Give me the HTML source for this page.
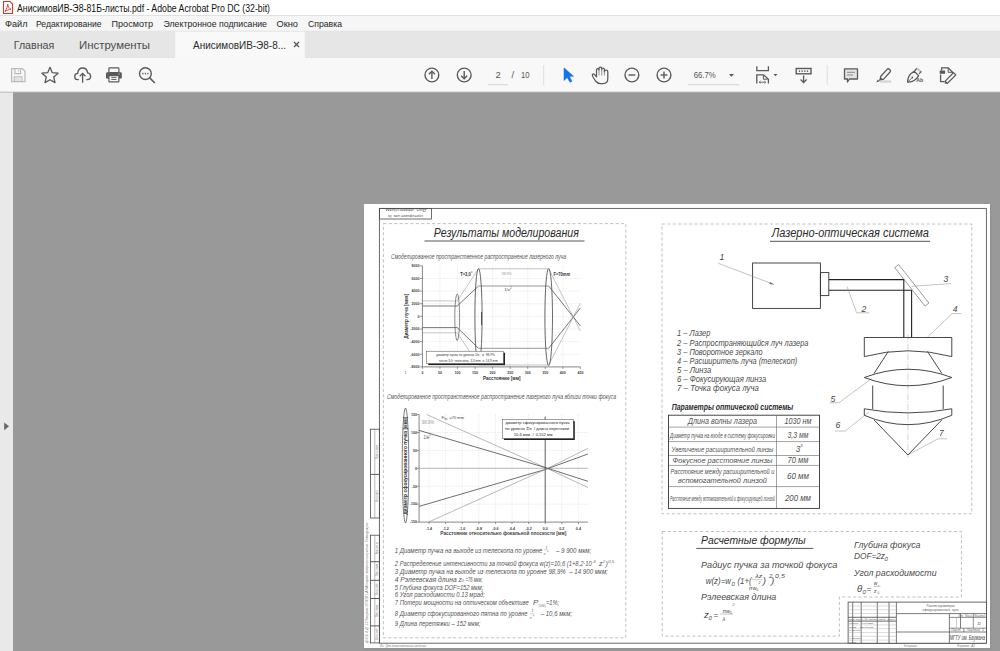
<!DOCTYPE html>
<html><head><meta charset="utf-8"><title>Acrobat</title>
<style>
*{margin:0;padding:0}
html,body{width:1000px;height:651px;overflow:hidden;background:#999999}
svg{position:absolute;left:0;top:0;display:block}
text{font-family:"Liberation Sans",sans-serif;white-space:pre}
</style></head><body>
<svg width="1000" height="651" viewBox="0 0 1000 651">
<rect x="0.00" y="0.00" width="1000.00" height="651.00" fill="#999999" stroke="none" stroke-width="0.6" />
<rect x="0.00" y="0.00" width="1000.00" height="15.50" fill="#ffffff" stroke="none" stroke-width="0.6" />
<path d="M3.5 1.5 H10 L12.5 4 V13.5 H3.5 Z" fill="none" stroke="#e0352b" stroke-width="1.1" />
<path d="M5 11.5 C6.5 9 7.5 6.5 7.8 4.2 C8 6.5 9 8.5 11 9.3 C9 9.3 6.8 10.3 5 11.5 Z" fill="none" stroke="#e0352b" stroke-width="0.9" />
<text x="17.00" y="12.00" font-size="10" fill="#111" text-anchor="start" textLength="253.00" lengthAdjust="spacingAndGlyphs" >АнисимовИВ-Э8-81Б-листы.pdf - Adobe Acrobat Pro DC (32-bit)</text>
<rect x="0.00" y="15.50" width="1000.00" height="15.50" fill="#f6f6f6" stroke="none" stroke-width="0.6" />
<text x="5.00" y="27.00" font-size="9" fill="#262626" text-anchor="start" textLength="22.50" lengthAdjust="spacingAndGlyphs" >Файл</text>
<text x="36.00" y="27.00" font-size="9" fill="#262626" text-anchor="start" textLength="65.50" lengthAdjust="spacingAndGlyphs" >Редактирование</text>
<text x="111.50" y="27.00" font-size="9" fill="#262626" text-anchor="start" textLength="41.50" lengthAdjust="spacingAndGlyphs" >Просмотр</text>
<text x="163.50" y="27.00" font-size="9" fill="#262626" text-anchor="start" textLength="103.50" lengthAdjust="spacingAndGlyphs" >Электронное подписание</text>
<text x="276.50" y="27.00" font-size="9" fill="#262626" text-anchor="start" textLength="21.50" lengthAdjust="spacingAndGlyphs" >Окно</text>
<text x="308.00" y="27.00" font-size="9" fill="#262626" text-anchor="start" textLength="34.00" lengthAdjust="spacingAndGlyphs" >Справка</text>
<rect x="0.00" y="31.00" width="1000.00" height="27.00" fill="#e6e6e6" stroke="none" stroke-width="0.6" />
<rect x="174.70" y="31.60" width="130.50" height="26.60" fill="#f9f9f9" stroke="none" stroke-width="0.6" />
<line x1="174.70" y1="31.60" x2="174.70" y2="58.20" stroke="#dedede" stroke-width="0.6" />
<line x1="305.20" y1="31.60" x2="305.20" y2="58.20" stroke="#dedede" stroke-width="0.6" />
<line x1="0.00" y1="31.10" x2="1000.00" y2="31.10" stroke="#e3e3e3" stroke-width="0.6" />
<text x="13.75" y="49.00" font-size="11.5" fill="#4b4b4b" text-anchor="start" textLength="40.50" lengthAdjust="spacingAndGlyphs" >Главная</text>
<text x="79.00" y="49.00" font-size="11.5" fill="#4b4b4b" text-anchor="start" textLength="71.00" lengthAdjust="spacingAndGlyphs" >Инструменты</text>
<text x="193.00" y="49.00" font-size="11.5" fill="#2c2c2c" text-anchor="start" textLength="93.00" lengthAdjust="spacingAndGlyphs" >АнисимовИВ-Э8-8...</text>
<line x1="294.00" y1="42.00" x2="299.00" y2="47.00" stroke="#555" stroke-width="1.2" />
<line x1="299.00" y1="42.00" x2="294.00" y2="47.00" stroke="#555" stroke-width="1.2" />
<rect x="0.00" y="58.00" width="1000.00" height="34.50" fill="#f8f8f8" stroke="none" stroke-width="0.6" />
<line x1="0.00" y1="92.20" x2="1000.00" y2="92.20" stroke="#7e7e7e" stroke-width="0.6" />
<rect x="0.00" y="92.50" width="13.00" height="559.00" fill="#e9e9e9" stroke="none" stroke-width="0.6" />
<path d="M4.2 422.5 L9 426.3 L4.2 430.2 Z" fill="#666" stroke="none" stroke-width="0.6" />
<path d="M11.6 68.6 H22.4 L25 71.2 V81.6 H11.6 Z" fill="none" stroke="#b9b9b9" stroke-width="1.25" />
<path d="M14.9 68.6 V73.6 H20.6 V68.6" fill="none" stroke="#b9b9b9" stroke-width="1.15" />
<path d="M14.2 81.6 V76.8 H22 V81.6" fill="none" stroke="#b9b9b9" stroke-width="1.15" />
<rect x="15.00" y="77.50" width="6.50" height="3.60" fill="#e2e2e2" stroke="none" stroke-width="0.6" />
<line x1="18.60" y1="69.80" x2="18.60" y2="71.60" stroke="#b9b9b9" stroke-width="0.9" />
<path d="M50.00,67.30 L52.29,72.64 L58.08,73.17 L53.71,77.01 L55.00,82.68 L50.00,79.70 L45.00,82.68 L46.29,77.01 L41.92,73.17 L47.71,72.64 Z" fill="none" stroke="#5a5a5a" stroke-width="1.3" stroke-linejoin="round"/>
<path d="M78.8 79.7 H77.5 C75.8 79.7 74.7 78.2 74.7 76.5 C74.7 74.8 76 73.5 77.6 73.4 C78 70.3 80 68 82.6 68 C85.3 68 87.2 70 87.6 72.8 C89.4 73 90.6 74.5 90.6 76.3 C90.6 78.2 89.2 79.7 87.4 79.7 H86.4" fill="none" stroke="#5a5a5a" stroke-width="1.3" />
<line x1="82.60" y1="73.50" x2="82.60" y2="82.70" stroke="#5a5a5a" stroke-width="1.3" />
<path d="M79.8 76.2 L82.6 73.4 L85.4 76.2" fill="none" stroke="#5a5a5a" stroke-width="1.3" />
<rect x="108.9" y="67.9" width="10" height="4.6" rx="0.8" fill="none" stroke="#5a5a5a" stroke-width="1.2"/>
<path d="M106 73.6 Q106 72.3 107.3 72.3 H120.5 Q121.8 72.3 121.8 73.6 V78.6 H106 Z" fill="#5a5a5a" stroke="none" stroke-width="0.6" />
<rect x="108.9" y="75.7" width="10" height="6.1" rx="0.6" fill="#f8f8f8" stroke="#5a5a5a" stroke-width="1.2"/>
<line x1="111.30" y1="77.60" x2="116.50" y2="77.60" stroke="#5a5a5a" stroke-width="0.9" />
<line x1="111.30" y1="79.50" x2="116.50" y2="79.50" stroke="#5a5a5a" stroke-width="0.9" />
<rect x="118.30" y="73.60" width="1.50" height="1.00" fill="#aaa" stroke="none" stroke-width="0.6" />
<circle cx="145.4" cy="73.6" r="5.9" fill="none" stroke="#5a5a5a" stroke-width="1.4"/>
<line x1="149.70" y1="77.90" x2="154.80" y2="83.00" stroke="#5a5a5a" stroke-width="1.6" />
<rect x="142.27" y="72.8" width="1.2" height="1.6" fill="#5a5a5a"/>
<rect x="144.80" y="72.8" width="1.2" height="1.6" fill="#5a5a5a"/>
<rect x="147.33" y="72.8" width="1.2" height="1.6" fill="#5a5a5a"/>
<circle cx="431.9" cy="75" r="6.9" fill="none" stroke="#5a5a5a" stroke-width="1.4"/>
<line x1="431.90" y1="71.30" x2="431.90" y2="79.00" stroke="#5a5a5a" stroke-width="1.4" />
<path d="M428.9 74.2 L431.9 71.2 L434.9 74.2" fill="none" stroke="#5a5a5a" stroke-width="1.4" />
<circle cx="464.2" cy="75" r="6.9" fill="none" stroke="#5a5a5a" stroke-width="1.4"/>
<line x1="464.20" y1="71.00" x2="464.20" y2="78.70" stroke="#5a5a5a" stroke-width="1.4" />
<path d="M461.2 75.8 L464.2 78.8 L467.2 75.8" fill="none" stroke="#5a5a5a" stroke-width="1.4" />
<text x="495.60" y="78.20" font-size="9.5" fill="#555" text-anchor="start" >2</text>
<line x1="487.80" y1="84.70" x2="508.00" y2="84.70" stroke="#d4d4d4" stroke-width="1" />
<text x="511.50" y="78.20" font-size="9.5" fill="#555" text-anchor="start" >/</text>
<text x="521.00" y="78.20" font-size="9.5" fill="#555" text-anchor="start" textLength="8.50" lengthAdjust="spacingAndGlyphs" >10</text>
<line x1="543.70" y1="65.00" x2="543.70" y2="85.00" stroke="#dedede" stroke-width="1" />
<path d="M564 67.8 L564 80.5 L567.2 77.6 L570 82.2 L572 81.2 L569.5 76.6 L573.5 76.2 Z" fill="#1473e6" stroke="#1473e6" stroke-width="0.5" stroke-linejoin="round"/>
<path d="M596.5 76.8 L594.6 74.6 Q593.2 73.3 592.4 74.5 Q592.2 75.5 593 77 L595.5 81 Q597.5 83.6 600.5 83.6 H603 Q607.8 83.6 607.8 78.5 V71.8 Q607.8 70 606.1 70 Q604.4 70 604.4 71.8 V69.7 Q604.4 68 603 68 Q601.7 68 601.7 69.7 V68.7 Q601.7 67 600.35 67 Q599 67 599 68.7 V70.2 Q599 68.5 597.75 68.5 Q596.5 68.5 596.5 70.2 Z" fill="none" stroke="#5a5a5a" stroke-width="1.25" stroke-linejoin="round"/>
<path d="M599 70.2 V75.5 M601.7 69.7 V75.5 M604.4 71.8 V75.5" fill="none" stroke="#8a8a8a" stroke-width="0.9" />
<circle cx="631.9" cy="75" r="6.9" fill="none" stroke="#5a5a5a" stroke-width="1.4"/>
<line x1="628.50" y1="75.00" x2="635.30" y2="75.00" stroke="#5a5a5a" stroke-width="1.4" />
<circle cx="664" cy="75" r="6.9" fill="none" stroke="#5a5a5a" stroke-width="1.4"/>
<line x1="660.60" y1="75.00" x2="667.40" y2="75.00" stroke="#5a5a5a" stroke-width="1.4" />
<line x1="664.00" y1="71.60" x2="664.00" y2="78.40" stroke="#5a5a5a" stroke-width="1.4" />
<text x="693.70" y="78.00" font-size="8.8" fill="#555" text-anchor="start" textLength="22.00" lengthAdjust="spacingAndGlyphs" >66.7%</text>
<path d="M729 74 L734 74 L731.5 76.8 Z" fill="#555" stroke="none" stroke-width="0.6" />
<line x1="687.70" y1="84.70" x2="739.50" y2="84.70" stroke="#d4d4d4" stroke-width="1" />
<path d="M756.8 66.3 V70.6 H768.4 V66.3" fill="none" stroke="#5a5a5a" stroke-width="1.3" />
<path d="M756.8 83.6 V74.9 H763.6 L768.4 79.4 V83.6" fill="none" stroke="#5a5a5a" stroke-width="1.3" />
<path d="M763.4 75.3 V79.2 H767.6" fill="none" stroke="#5a5a5a" stroke-width="1.0" />
<line x1="759.30" y1="82.20" x2="765.60" y2="82.20" stroke="#5a5a5a" stroke-width="0.9" />
<path d="M760.6 81 L759.2 82.2 L760.6 83.4 M764.3 81 L765.7 82.2 L764.3 83.4" fill="none" stroke="#5a5a5a" stroke-width="0.8" />
<path d="M773.5 74 L777.5 74 L775.5 76.3 Z" fill="#555" stroke="none" stroke-width="0.6" />
<rect x="796.20" y="68.50" width="14.80" height="5.30" fill="none" stroke="#5a5a5a" stroke-width="1.4" />
<rect x="798.80" y="70.40" width="1.30" height="1.50" fill="#5a5a5a" stroke="none" stroke-width="0.6" />
<rect x="801.50" y="70.40" width="1.30" height="1.50" fill="#5a5a5a" stroke="none" stroke-width="0.6" />
<rect x="804.20" y="70.40" width="1.30" height="1.50" fill="#5a5a5a" stroke="none" stroke-width="0.6" />
<rect x="806.90" y="70.40" width="1.30" height="1.50" fill="#5a5a5a" stroke="none" stroke-width="0.6" />
<line x1="803.60" y1="75.50" x2="803.60" y2="82.50" stroke="#5a5a5a" stroke-width="1.3" />
<path d="M800.6 79.5 L803.6 82.5 L806.6 79.5" fill="none" stroke="#5a5a5a" stroke-width="1.3" />
<line x1="827.20" y1="65.00" x2="827.20" y2="85.00" stroke="#dedede" stroke-width="1" />
<path d="M844.5 68.8 H857.5 V79 H849.5 L847.5 82 V79 H844.5 Z" fill="#e3e3e3" stroke="#5a5a5a" stroke-width="1.3" stroke-linejoin="round"/>
<line x1="847.00" y1="72.30" x2="855.00" y2="72.30" stroke="#8a8a8a" stroke-width="1" />
<line x1="847.00" y1="75.00" x2="853.00" y2="75.00" stroke="#8a8a8a" stroke-width="1" />
<g transform="rotate(-48 885.3 74.3)"><rect x="879.3" y="72.3" width="12.5" height="4" rx="1.6" fill="none" stroke="#5a5a5a" stroke-width="1.3"/><path d="M879.3 72.8 L876.6 73.5 V75.1 L879.3 75.8 Z" fill="#5a5a5a"/></g>
<path d="M877.9 79.4 L876.2 82.2 L879.5 81.4 Z" fill="#5a5a5a" stroke="none" stroke-width="0.6" />
<rect x="879.80" y="80.40" width="11.40" height="2.30" fill="#d6d6d6" stroke="none" stroke-width="0.6" />
<path d="M907.6 82.2 Q907.6 77 911 73.5 L914.2 71.2 L918.6 75.6 L916.3 78.8 Q912.8 82.2 907.6 82.2 Z" fill="none" stroke="#5a5a5a" stroke-width="1.3" stroke-linejoin="round"/>
<line x1="907.90" y1="81.90" x2="911.60" y2="78.20" stroke="#5a5a5a" stroke-width="0.9" />
<circle cx="912.3" cy="77.5" r="0.9" fill="#5a5a5a"/>
<line x1="914.60" y1="70.80" x2="917.10" y2="68.30" stroke="#5a5a5a" stroke-width="1.3" />
<line x1="917.10" y1="68.30" x2="921.30" y2="72.50" stroke="#c6c6c6" stroke-width="2" />
<line x1="919.00" y1="73.80" x2="921.40" y2="71.40" stroke="#5a5a5a" stroke-width="1.2" />
<text x="916.20" y="81.60" font-size="4.6" fill="#5a5a5a" text-anchor="start" textLength="7.00" lengthAdjust="spacingAndGlyphs" font-weight="bold" >Ab</text>
<rect x="939.70" y="70.50" width="5.40" height="3.30" fill="#5a5a5a" stroke="none" stroke-width="0.6" />
<path d="M941.6 70.5 V67.9 H948.2 L952.6 72.3 V73.5" fill="none" stroke="#5a5a5a" stroke-width="1.3" />
<path d="M948.2 67.9 V72.3 H952.6" fill="none" stroke="#5a5a5a" stroke-width="1.0" />
<path d="M940.6 74.5 V81.6 H944.5" fill="none" stroke="#5a5a5a" stroke-width="1.3" />
<g transform="rotate(-45 950.3 78.2)"><rect x="944.5" y="76.6" width="12" height="3.2" fill="#f8f8f8" stroke="#5a5a5a" stroke-width="1.2"/><path d="M944.5 76.6 L942.3 78.2 L944.5 79.8 Z" fill="#5a5a5a"/></g>
<rect x="365.00" y="205.00" width="626.50" height="444.50" fill="#939393" stroke="none" stroke-width="0.6" />
<rect x="364.00" y="204.00" width="626.00" height="444.00" fill="#ffffff" stroke="none" stroke-width="0.6" />
<rect x="379.40" y="208.40" width="607.00" height="434.80" fill="none" stroke="#5a5a5a" stroke-width="0.9" />
<rect x="379.40" y="208.40" width="52.00" height="10.60" fill="none" stroke="#4a4a4a" stroke-width="0.8" />
<text x="405.40" y="211.90" font-size="3.8" fill="#555" text-anchor="middle" textLength="42.00" lengthAdjust="spacingAndGlyphs" font-style="italic" transform="rotate(180 405.4 210.6)">Доп. взамен/изм.</text>
<text x="405.40" y="217.50" font-size="3.8" fill="#555" text-anchor="middle" textLength="35.00" lengthAdjust="spacingAndGlyphs" font-style="italic" transform="rotate(180 405.4 216.2)">сертификат изм. №</text>
<rect x="370.40" y="429.20" width="9.20" height="88.80" fill="none" stroke="#4a4a4a" stroke-width="0.8" />
<line x1="374.80" y1="429.20" x2="374.80" y2="518.00" stroke="#777" stroke-width="0.5" />
<line x1="370.40" y1="474.40" x2="379.60" y2="474.40" stroke="#4a4a4a" stroke-width="0.9" />
<rect x="370.40" y="535.20" width="9.20" height="107.70" fill="none" stroke="#4a4a4a" stroke-width="0.8" />
<line x1="374.80" y1="535.20" x2="374.80" y2="642.90" stroke="#777" stroke-width="0.5" />
<line x1="370.40" y1="561.70" x2="379.60" y2="561.70" stroke="#4a4a4a" stroke-width="0.9" />
<line x1="370.40" y1="580.30" x2="379.60" y2="580.30" stroke="#4a4a4a" stroke-width="0.9" />
<line x1="370.40" y1="598.50" x2="379.60" y2="598.50" stroke="#4a4a4a" stroke-width="0.9" />
<line x1="370.40" y1="625.90" x2="379.60" y2="625.90" stroke="#4a4a4a" stroke-width="0.9" />
<text x="378.00" y="452.00" font-size="3.2" fill="#777" text-anchor="middle" textLength="14.00" lengthAdjust="spacingAndGlyphs" font-style="italic" transform="rotate(-90 378 452)">Подп. и дата</text>
<text x="378.00" y="496.00" font-size="3.2" fill="#777" text-anchor="middle" textLength="12.00" lengthAdjust="spacingAndGlyphs" font-style="italic" transform="rotate(-90 378 496)">Инв. № дубл.</text>
<text x="378.00" y="548.00" font-size="3.2" fill="#777" text-anchor="middle" textLength="12.00" lengthAdjust="spacingAndGlyphs" font-style="italic" transform="rotate(-90 378 548)">Взам. инв. №</text>
<text x="378.00" y="570.00" font-size="3.2" fill="#777" text-anchor="middle" textLength="12.00" lengthAdjust="spacingAndGlyphs" font-style="italic" transform="rotate(-90 378 570)">Подп. и дата</text>
<text x="378.00" y="589.00" font-size="3.2" fill="#777" text-anchor="middle" textLength="12.00" lengthAdjust="spacingAndGlyphs" font-style="italic" transform="rotate(-90 378 589)">Инв. № подл.</text>
<text x="378.00" y="611.00" font-size="3.2" fill="#777" text-anchor="middle" textLength="12.00" lengthAdjust="spacingAndGlyphs" font-style="italic" transform="rotate(-90 378 611)">Подп. и дата</text>
<text x="378.00" y="634.00" font-size="3.2" fill="#777" text-anchor="middle" textLength="12.00" lengthAdjust="spacingAndGlyphs" font-style="italic" transform="rotate(-90 378 634)">Инв. № подл.</text>
<text x="368.00" y="583.00" font-size="3.3" fill="#777" text-anchor="middle" textLength="120.00" lengthAdjust="spacingAndGlyphs" font-style="italic" transform="rotate(-90 368 583)">ДНОБ. 4 ДГ-13 Лазерная ЭЛ-9ТИ 1.АЯ Аппарат лазерного излучения. Точка фокуса</text>
<text x="380.00" y="646.60" font-size="3.3" fill="#777" text-anchor="start" textLength="46.00" lengthAdjust="spacingAndGlyphs" font-style="italic" >Ин.  Для дополнительных сведений</text>
<text x="904.00" y="646.80" font-size="3.3" fill="#777" text-anchor="start" textLength="13.00" lengthAdjust="spacingAndGlyphs" font-style="italic" >Копировал</text>
<text x="957.00" y="646.80" font-size="3.3" fill="#777" text-anchor="start" textLength="18.00" lengthAdjust="spacingAndGlyphs" font-style="italic" >Формат  А1</text>
<rect x="383.40" y="223.60" width="242.40" height="414.20" fill="none" stroke="#a8a8a8" stroke-width="0.7" stroke-dasharray="3.2,2.2"/>
<rect x="662.00" y="224.00" width="309.80" height="289.80" fill="none" stroke="#a8a8a8" stroke-width="0.7" stroke-dasharray="3.2,2.2"/>
<path d="M662.3 531.5 H961.4 V597 H839.4 V636.1 H662.3 Z" fill="none" stroke="#a8a8a8" stroke-width="0.7" stroke-dasharray="3.2,2.2"/>
<text x="433.80" y="236.50" font-size="12.3" fill="#2a2a2a" text-anchor="start" textLength="145.00" lengthAdjust="spacingAndGlyphs" font-style="italic" >Результаты моделирования</text>
<line x1="424.50" y1="241.00" x2="584.50" y2="241.00" stroke="#444" stroke-width="0.9" />
<text x="391.00" y="259.00" font-size="6.3" fill="#555" text-anchor="start" textLength="175.00" lengthAdjust="spacingAndGlyphs" font-style="italic" >Смоделированное пространственное распространение лазерного луча</text>
<line x1="439.96" y1="265.80" x2="439.96" y2="366.90" stroke="#d8d8d8" stroke-width="0.5" stroke-dasharray="1.5,1"/>
<line x1="457.51" y1="265.80" x2="457.51" y2="366.90" stroke="#d8d8d8" stroke-width="0.5" stroke-dasharray="1.5,1"/>
<line x1="475.07" y1="265.80" x2="475.07" y2="366.90" stroke="#d8d8d8" stroke-width="0.5" stroke-dasharray="1.5,1"/>
<line x1="492.62" y1="265.80" x2="492.62" y2="366.90" stroke="#d8d8d8" stroke-width="0.5" stroke-dasharray="1.5,1"/>
<line x1="510.18" y1="265.80" x2="510.18" y2="366.90" stroke="#d8d8d8" stroke-width="0.5" stroke-dasharray="1.5,1"/>
<line x1="527.73" y1="265.80" x2="527.73" y2="366.90" stroke="#d8d8d8" stroke-width="0.5" stroke-dasharray="1.5,1"/>
<line x1="545.29" y1="265.80" x2="545.29" y2="366.90" stroke="#d8d8d8" stroke-width="0.5" stroke-dasharray="1.5,1"/>
<line x1="562.84" y1="265.80" x2="562.84" y2="366.90" stroke="#d8d8d8" stroke-width="0.5" stroke-dasharray="1.5,1"/>
<line x1="422.40" y1="278.44" x2="580.40" y2="278.44" stroke="#d8d8d8" stroke-width="0.5" stroke-dasharray="1.5,1"/>
<line x1="422.40" y1="291.07" x2="580.40" y2="291.07" stroke="#d8d8d8" stroke-width="0.5" stroke-dasharray="1.5,1"/>
<line x1="422.40" y1="303.71" x2="580.40" y2="303.71" stroke="#d8d8d8" stroke-width="0.5" stroke-dasharray="1.5,1"/>
<line x1="422.40" y1="316.35" x2="580.40" y2="316.35" stroke="#d8d8d8" stroke-width="0.5" stroke-dasharray="1.5,1"/>
<line x1="422.40" y1="328.99" x2="580.40" y2="328.99" stroke="#d8d8d8" stroke-width="0.5" stroke-dasharray="1.5,1"/>
<line x1="422.40" y1="341.62" x2="580.40" y2="341.62" stroke="#d8d8d8" stroke-width="0.5" stroke-dasharray="1.5,1"/>
<line x1="422.40" y1="354.26" x2="580.40" y2="354.26" stroke="#d8d8d8" stroke-width="0.5" stroke-dasharray="1.5,1"/>
<line x1="422.40" y1="265.80" x2="422.40" y2="366.90" stroke="#555" stroke-width="0.7" />
<line x1="422.40" y1="366.90" x2="580.40" y2="366.90" stroke="#555" stroke-width="0.7" />
<line x1="419.90" y1="265.80" x2="422.40" y2="265.80" stroke="#555" stroke-width="0.6" />
<text x="419.50" y="267.10" font-size="3.6" fill="#444" text-anchor="end" font-weight="bold" >8000</text>
<line x1="419.90" y1="278.44" x2="422.40" y2="278.44" stroke="#555" stroke-width="0.6" />
<text x="419.50" y="279.74" font-size="3.6" fill="#444" text-anchor="end" font-weight="bold" >6000</text>
<line x1="419.90" y1="291.07" x2="422.40" y2="291.07" stroke="#555" stroke-width="0.6" />
<text x="419.50" y="292.38" font-size="3.6" fill="#444" text-anchor="end" font-weight="bold" >4000</text>
<line x1="419.90" y1="303.71" x2="422.40" y2="303.71" stroke="#555" stroke-width="0.6" />
<text x="419.50" y="305.01" font-size="3.6" fill="#444" text-anchor="end" font-weight="bold" >2000</text>
<line x1="419.90" y1="316.35" x2="422.40" y2="316.35" stroke="#555" stroke-width="0.6" />
<text x="419.50" y="317.65" font-size="3.6" fill="#444" text-anchor="end" font-weight="bold" >0</text>
<line x1="419.90" y1="328.99" x2="422.40" y2="328.99" stroke="#555" stroke-width="0.6" />
<text x="419.50" y="330.29" font-size="3.6" fill="#444" text-anchor="end" font-weight="bold" >-2000</text>
<line x1="419.90" y1="341.62" x2="422.40" y2="341.62" stroke="#555" stroke-width="0.6" />
<text x="419.50" y="342.93" font-size="3.6" fill="#444" text-anchor="end" font-weight="bold" >-4000</text>
<line x1="419.90" y1="354.26" x2="422.40" y2="354.26" stroke="#555" stroke-width="0.6" />
<text x="419.50" y="355.56" font-size="3.6" fill="#444" text-anchor="end" font-weight="bold" >-6000</text>
<line x1="419.90" y1="366.90" x2="422.40" y2="366.90" stroke="#555" stroke-width="0.6" />
<text x="419.50" y="368.20" font-size="3.6" fill="#444" text-anchor="end" font-weight="bold" >-8000</text>
<line x1="422.40" y1="366.90" x2="422.40" y2="368.90" stroke="#555" stroke-width="0.6" />
<text x="422.40" y="374.30" font-size="3.6" fill="#444" text-anchor="middle" font-weight="bold" >0</text>
<line x1="439.96" y1="366.90" x2="439.96" y2="368.90" stroke="#555" stroke-width="0.6" />
<text x="439.96" y="374.30" font-size="3.6" fill="#444" text-anchor="middle" font-weight="bold" >50</text>
<line x1="457.51" y1="366.90" x2="457.51" y2="368.90" stroke="#555" stroke-width="0.6" />
<text x="457.51" y="374.30" font-size="3.6" fill="#444" text-anchor="middle" font-weight="bold" >100</text>
<line x1="475.07" y1="366.90" x2="475.07" y2="368.90" stroke="#555" stroke-width="0.6" />
<text x="475.07" y="374.30" font-size="3.6" fill="#444" text-anchor="middle" font-weight="bold" >150</text>
<line x1="492.62" y1="366.90" x2="492.62" y2="368.90" stroke="#555" stroke-width="0.6" />
<text x="492.62" y="374.30" font-size="3.6" fill="#444" text-anchor="middle" font-weight="bold" >200</text>
<line x1="510.18" y1="366.90" x2="510.18" y2="368.90" stroke="#555" stroke-width="0.6" />
<text x="510.18" y="374.30" font-size="3.6" fill="#444" text-anchor="middle" font-weight="bold" >250</text>
<line x1="527.73" y1="366.90" x2="527.73" y2="368.90" stroke="#555" stroke-width="0.6" />
<text x="527.73" y="374.30" font-size="3.6" fill="#444" text-anchor="middle" font-weight="bold" >300</text>
<line x1="545.29" y1="366.90" x2="545.29" y2="368.90" stroke="#555" stroke-width="0.6" />
<text x="545.29" y="374.30" font-size="3.6" fill="#444" text-anchor="middle" font-weight="bold" >350</text>
<line x1="562.84" y1="366.90" x2="562.84" y2="368.90" stroke="#555" stroke-width="0.6" />
<text x="562.84" y="374.30" font-size="3.6" fill="#444" text-anchor="middle" font-weight="bold" >400</text>
<line x1="580.40" y1="366.90" x2="580.40" y2="368.90" stroke="#555" stroke-width="0.6" />
<text x="580.40" y="374.30" font-size="3.6" fill="#444" text-anchor="middle" font-weight="bold" >450</text>
<text x="404.60" y="374.30" font-size="3.6" fill="#666" text-anchor="start" >1</text>
<text x="407.20" y="316.30" font-size="1" fill="#777" text-anchor="middle" textLength="1.00" lengthAdjust="spacingAndGlyphs" font-style="italic" transform="rotate(-90 407.2 316.3)"></text>
<text x="407.60" y="316.30" font-size="5.2" fill="#333" text-anchor="middle" textLength="45.00" lengthAdjust="spacingAndGlyphs" font-weight="bold" transform="rotate(-90 407.6 316.3)">Диаметр луча [мкм]</text>
<text x="501.80" y="379.50" font-size="5.5" fill="#333" text-anchor="middle" textLength="37.60" lengthAdjust="spacingAndGlyphs" font-weight="bold" >Расстояние [мм]</text>
<line x1="422.40" y1="306.00" x2="457.20" y2="306.00" stroke="#555" stroke-width="0.8" />
<line x1="422.40" y1="327.60" x2="457.20" y2="327.60" stroke="#555" stroke-width="0.8" />
<line x1="422.40" y1="300.90" x2="457.20" y2="300.90" stroke="#8a8a8a" stroke-width="0.5" />
<line x1="422.40" y1="332.80" x2="457.20" y2="332.80" stroke="#8a8a8a" stroke-width="0.5" />
<line x1="457.20" y1="306.00" x2="478.50" y2="286.00" stroke="#555" stroke-width="0.8" />
<line x1="457.20" y1="327.60" x2="478.50" y2="348.30" stroke="#555" stroke-width="0.8" />
<line x1="457.20" y1="300.90" x2="478.50" y2="268.80" stroke="#8a8a8a" stroke-width="0.5" />
<line x1="457.20" y1="332.80" x2="478.50" y2="365.00" stroke="#8a8a8a" stroke-width="0.5" />
<line x1="478.50" y1="286.00" x2="548.70" y2="286.00" stroke="#6a6a6a" stroke-width="0.7" />
<line x1="478.50" y1="348.30" x2="548.70" y2="348.30" stroke="#6a6a6a" stroke-width="0.7" />
<line x1="478.50" y1="268.80" x2="548.70" y2="268.80" stroke="#8a8a8a" stroke-width="0.5" />
<line x1="478.50" y1="365.00" x2="548.70" y2="365.00" stroke="#8a8a8a" stroke-width="0.5" />
<line x1="548.70" y1="286.00" x2="580.40" y2="325.95" stroke="#555" stroke-width="0.8" />
<line x1="548.70" y1="348.30" x2="580.40" y2="307.97" stroke="#555" stroke-width="0.8" />
<line x1="548.70" y1="268.80" x2="580.40" y2="330.91" stroke="#8a8a8a" stroke-width="0.5" />
<line x1="548.70" y1="365.00" x2="580.40" y2="303.15" stroke="#8a8a8a" stroke-width="0.5" />
<ellipse cx="457.2" cy="317.3" rx="2.4" ry="23.3" fill="none" stroke="#555" stroke-width="0.7"/>
<ellipse cx="478.5" cy="316.8" rx="3.6" ry="48.2" fill="none" stroke="#444" stroke-width="0.8"/>
<ellipse cx="548.7" cy="317.1" rx="3.8" ry="48.5" fill="none" stroke="#444" stroke-width="0.8"/>
<line x1="481.50" y1="312.00" x2="481.50" y2="325.00" stroke="#333" stroke-width="0.8" />
<text x="460.20" y="275.60" font-size="4.6" fill="#333" text-anchor="start" textLength="10.50" lengthAdjust="spacingAndGlyphs" font-weight="bold" >T=3,0</text>
<text x="471.00" y="273.00" font-size="2.8" fill="#333" text-anchor="start" >x</text>
<text x="501.70" y="275.20" font-size="4.2" fill="#999" text-anchor="start" textLength="10.00" lengthAdjust="spacingAndGlyphs" >98.9%</text>
<text x="504.20" y="291.20" font-size="4.2" fill="#555" text-anchor="start" textLength="6.00" lengthAdjust="spacingAndGlyphs" >1/e</text>
<text x="510.30" y="289.20" font-size="2.6" fill="#555" text-anchor="start" >2</text>
<text x="553.50" y="275.80" font-size="4.8" fill="#333" text-anchor="start" textLength="16.50" lengthAdjust="spacingAndGlyphs" font-weight="bold" >F=70mm</text>
<rect x="428.20" y="352.70" width="76.80" height="12.40" fill="#222" stroke="none" stroke-width="0.6" />
<rect x="426.70" y="351.20" width="76.80" height="12.40" fill="#fff" stroke="#444" stroke-width="0.5" />
<text x="436.30" y="355.90" font-size="3.3" fill="#333" text-anchor="start" textLength="58.50" lengthAdjust="spacingAndGlyphs" >диаметр пучка по уровню 1/e²  и  98.9%</text>
<text x="439.10" y="361.70" font-size="3.3" fill="#333" text-anchor="start" textLength="58.60" lengthAdjust="spacingAndGlyphs" >после 3,0ˣ телескопа  3,3 mm  и  14,9 mm</text>
<text x="387.00" y="398.60" font-size="6.3" fill="#555" text-anchor="start" textLength="229.00" lengthAdjust="spacingAndGlyphs" font-style="italic" >Смоделированное пространственное распространение лазерного луча вблизи точки фокуса</text>
<line x1="429.00" y1="414.50" x2="429.00" y2="522.10" stroke="#d8d8d8" stroke-width="0.5" stroke-dasharray="1.5,1"/>
<line x1="445.60" y1="414.50" x2="445.60" y2="522.10" stroke="#d8d8d8" stroke-width="0.5" stroke-dasharray="1.5,1"/>
<line x1="462.20" y1="414.50" x2="462.20" y2="522.10" stroke="#d8d8d8" stroke-width="0.5" stroke-dasharray="1.5,1"/>
<line x1="478.80" y1="414.50" x2="478.80" y2="522.10" stroke="#d8d8d8" stroke-width="0.5" stroke-dasharray="1.5,1"/>
<line x1="495.40" y1="414.50" x2="495.40" y2="522.10" stroke="#d8d8d8" stroke-width="0.5" stroke-dasharray="1.5,1"/>
<line x1="512.00" y1="414.50" x2="512.00" y2="522.10" stroke="#d8d8d8" stroke-width="0.5" stroke-dasharray="1.5,1"/>
<line x1="528.60" y1="414.50" x2="528.60" y2="522.10" stroke="#d8d8d8" stroke-width="0.5" stroke-dasharray="1.5,1"/>
<line x1="561.80" y1="414.50" x2="561.80" y2="522.10" stroke="#d8d8d8" stroke-width="0.5" stroke-dasharray="1.5,1"/>
<line x1="578.40" y1="414.50" x2="578.40" y2="522.10" stroke="#d8d8d8" stroke-width="0.5" stroke-dasharray="1.5,1"/>
<line x1="419.10" y1="432.43" x2="587.90" y2="432.43" stroke="#d8d8d8" stroke-width="0.5" stroke-dasharray="1.5,1"/>
<line x1="419.10" y1="450.37" x2="587.90" y2="450.37" stroke="#d8d8d8" stroke-width="0.5" stroke-dasharray="1.5,1"/>
<line x1="419.10" y1="486.23" x2="587.90" y2="486.23" stroke="#d8d8d8" stroke-width="0.5" stroke-dasharray="1.5,1"/>
<line x1="419.10" y1="504.17" x2="587.90" y2="504.17" stroke="#d8d8d8" stroke-width="0.5" stroke-dasharray="1.5,1"/>
<line x1="419.10" y1="414.50" x2="419.10" y2="522.10" stroke="#555" stroke-width="0.7" />
<line x1="419.10" y1="522.10" x2="587.90" y2="522.10" stroke="#555" stroke-width="0.7" />
<line x1="416.60" y1="414.50" x2="419.10" y2="414.50" stroke="#555" stroke-width="0.6" />
<text x="417.00" y="415.80" font-size="3.6" fill="#444" text-anchor="end" font-weight="bold" >150</text>
<line x1="416.60" y1="432.43" x2="419.10" y2="432.43" stroke="#555" stroke-width="0.6" />
<text x="417.00" y="433.73" font-size="3.6" fill="#444" text-anchor="end" font-weight="bold" >100</text>
<line x1="416.60" y1="450.37" x2="419.10" y2="450.37" stroke="#555" stroke-width="0.6" />
<text x="417.00" y="451.67" font-size="3.6" fill="#444" text-anchor="end" font-weight="bold" >50</text>
<line x1="416.60" y1="468.30" x2="419.10" y2="468.30" stroke="#555" stroke-width="0.6" />
<text x="417.00" y="469.60" font-size="3.6" fill="#444" text-anchor="end" font-weight="bold" >0</text>
<line x1="416.60" y1="486.23" x2="419.10" y2="486.23" stroke="#555" stroke-width="0.6" />
<text x="417.00" y="487.53" font-size="3.6" fill="#444" text-anchor="end" font-weight="bold" >-50</text>
<line x1="416.60" y1="504.17" x2="419.10" y2="504.17" stroke="#555" stroke-width="0.6" />
<text x="417.00" y="505.47" font-size="3.6" fill="#444" text-anchor="end" font-weight="bold" >-100</text>
<line x1="416.60" y1="522.10" x2="419.10" y2="522.10" stroke="#555" stroke-width="0.6" />
<text x="417.00" y="523.40" font-size="3.6" fill="#444" text-anchor="end" font-weight="bold" >-150</text>
<line x1="429.00" y1="522.10" x2="429.00" y2="524.10" stroke="#555" stroke-width="0.6" />
<text x="429.00" y="530.00" font-size="3.7" fill="#444" text-anchor="middle" font-weight="bold" >-1.4</text>
<line x1="445.60" y1="522.10" x2="445.60" y2="524.10" stroke="#555" stroke-width="0.6" />
<text x="445.60" y="530.00" font-size="3.7" fill="#444" text-anchor="middle" font-weight="bold" >-1.2</text>
<line x1="462.20" y1="522.10" x2="462.20" y2="524.10" stroke="#555" stroke-width="0.6" />
<text x="462.20" y="530.00" font-size="3.7" fill="#444" text-anchor="middle" font-weight="bold" >-1.0</text>
<line x1="478.80" y1="522.10" x2="478.80" y2="524.10" stroke="#555" stroke-width="0.6" />
<text x="478.80" y="530.00" font-size="3.7" fill="#444" text-anchor="middle" font-weight="bold" >-0.8</text>
<line x1="495.40" y1="522.10" x2="495.40" y2="524.10" stroke="#555" stroke-width="0.6" />
<text x="495.40" y="530.00" font-size="3.7" fill="#444" text-anchor="middle" font-weight="bold" >-0.6</text>
<line x1="512.00" y1="522.10" x2="512.00" y2="524.10" stroke="#555" stroke-width="0.6" />
<text x="512.00" y="530.00" font-size="3.7" fill="#444" text-anchor="middle" font-weight="bold" >-0.4</text>
<line x1="528.60" y1="522.10" x2="528.60" y2="524.10" stroke="#555" stroke-width="0.6" />
<text x="528.60" y="530.00" font-size="3.7" fill="#444" text-anchor="middle" font-weight="bold" >-0.2</text>
<line x1="545.20" y1="522.10" x2="545.20" y2="524.10" stroke="#555" stroke-width="0.6" />
<text x="545.20" y="530.00" font-size="3.7" fill="#444" text-anchor="middle" font-weight="bold" >0.0</text>
<line x1="561.80" y1="522.10" x2="561.80" y2="524.10" stroke="#555" stroke-width="0.6" />
<text x="561.80" y="530.00" font-size="3.7" fill="#444" text-anchor="middle" font-weight="bold" >0.2</text>
<line x1="578.40" y1="522.10" x2="578.40" y2="524.10" stroke="#555" stroke-width="0.6" />
<text x="578.40" y="530.00" font-size="3.7" fill="#444" text-anchor="middle" font-weight="bold" >0.4</text>
<line x1="419.10" y1="468.30" x2="587.90" y2="468.30" stroke="#9a9a9a" stroke-width="0.7" />
<line x1="545.20" y1="416.50" x2="545.20" y2="522.10" stroke="#333" stroke-width="0.8" />
<polyline points="426.5,414.5 545.2,467.5 587.9,487.5" fill="none" stroke="#8a8a8a" stroke-width="0.6"/>
<polyline points="419.1,430.4 545.2,467.5 587.9,481.3" fill="none" stroke="#4a4a4a" stroke-width="0.8"/>
<polyline points="419.1,506.4 545.2,469.5 587.9,454.0" fill="none" stroke="#4a4a4a" stroke-width="0.8"/>
<polyline points="428.5,522.1 545.2,469.5 587.9,448.4" fill="none" stroke="#8a8a8a" stroke-width="0.6"/>
<ellipse cx="405.5" cy="465.5" rx="3.3" ry="57.5" fill="none" stroke="#444" stroke-width="0.7"/>
<text x="407.30" y="465.50" font-size="4.6" fill="#333" text-anchor="middle" textLength="98.00" lengthAdjust="spacingAndGlyphs" font-weight="bold" transform="rotate(-90 407.3 465.5)">диаметр сфокусированного пучка [мкм]</text>
<text x="503.30" y="535.40" font-size="5.4" fill="#444" text-anchor="middle" textLength="126.00" lengthAdjust="spacingAndGlyphs" font-weight="bold" >Расстояние относительно фокальной плоскости [мм]</text>
<text x="441.50" y="418.90" font-size="4.4" fill="#444" text-anchor="start" >F</text>
<text x="444.30" y="420.30" font-size="2.6" fill="#444" text-anchor="start" >foc</text>
<text x="449.50" y="418.90" font-size="4.4" fill="#444" text-anchor="start" textLength="14.50" lengthAdjust="spacingAndGlyphs" >=70 mm</text>
<text x="421.70" y="424.40" font-size="4.6" fill="#999" text-anchor="start" textLength="12.60" lengthAdjust="spacingAndGlyphs" >98.9%</text>
<text x="423.50" y="438.80" font-size="4.6" fill="#555" text-anchor="start" textLength="6.00" lengthAdjust="spacingAndGlyphs" >1/e</text>
<text x="429.30" y="436.20" font-size="2.8" fill="#555" text-anchor="start" >2</text>
<rect x="503.90" y="421.10" width="70.90" height="18.90" fill="#222" stroke="none" stroke-width="0.6" />
<rect x="502.40" y="419.60" width="70.90" height="18.90" fill="#fff" stroke="#444" stroke-width="0.5" />
<text x="537.60" y="424.40" font-size="3.8" fill="#222" text-anchor="middle" textLength="64.00" lengthAdjust="spacingAndGlyphs" >диаметр сфокусированного пучка</text>
<text x="537.00" y="430.20" font-size="3.8" fill="#222" text-anchor="middle" textLength="64.00" lengthAdjust="spacingAndGlyphs" >по уровню 1/e  / длина перетяжки</text>
<text x="527.30" y="428.20" font-size="2.2" fill="#222" text-anchor="start" >2</text>
<text x="533.20" y="435.50" font-size="3.8" fill="#222" text-anchor="middle" textLength="38.70" lengthAdjust="spacingAndGlyphs" >10,6 мкм  /  0,152 мм</text>
<text x="394.80" y="552.80" font-size="7.0" fill="#545454" text-anchor="start" textLength="147.60" lengthAdjust="spacingAndGlyphs" font-style="italic" >1 Диаметр пучка на выходе из телескопа по уровне</text>
<text x="394.80" y="566.00" font-size="7.0" fill="#545454" text-anchor="start" textLength="197.00" lengthAdjust="spacingAndGlyphs" font-style="italic" >2 Распределение интенсивности за точкой фокуса w(z)=10,6 (1+8,2·10</text>
<text x="394.80" y="573.80" font-size="7.0" fill="#545454" text-anchor="start" textLength="213.00" lengthAdjust="spacingAndGlyphs" font-style="italic" >3 Диаметр пучка на выходе из телескопа по уровне 98,9%  – 14 900 мкм;</text>
<text x="394.80" y="581.70" font-size="7.0" fill="#545454" text-anchor="start" textLength="67.00" lengthAdjust="spacingAndGlyphs" font-style="italic" >4 Рэлеевская длина z</text>
<text x="394.80" y="589.60" font-size="7.0" fill="#545454" text-anchor="start" textLength="88.50" lengthAdjust="spacingAndGlyphs" font-style="italic" >5 Глубина фокуса DOF=152 мкм;</text>
<text x="394.80" y="597.00" font-size="7.0" fill="#545454" text-anchor="start" textLength="90.00" lengthAdjust="spacingAndGlyphs" font-style="italic" >6 Угол расходимости 0.13 мрад;</text>
<text x="394.80" y="604.60" font-size="7.0" fill="#545454" text-anchor="start" textLength="134.00" lengthAdjust="spacingAndGlyphs" font-style="italic" >7 Потери мощности на оптическом объективе</text>
<text x="394.80" y="615.50" font-size="7.0" fill="#545454" text-anchor="start" textLength="132.70" lengthAdjust="spacingAndGlyphs" font-style="italic" >8 Диаметр сфокусированного пятна по уровне</text>
<text x="394.80" y="625.70" font-size="7.0" fill="#545454" text-anchor="start" textLength="85.60" lengthAdjust="spacingAndGlyphs" font-style="italic" >9 Длина перетяжки – 152 мкм;</text>
<text x="555.90" y="552.80" font-size="7.0" fill="#545454" text-anchor="start" textLength="35.40" lengthAdjust="spacingAndGlyphs" font-style="italic" >– 9 900 мкм;</text>
<text x="545.50" y="548.60" font-size="3.4" fill="#666" text-anchor="start" font-style="italic" >1</text>
<line x1="544.00" y1="550.00" x2="548.50" y2="550.00" stroke="#888" stroke-width="0.4" />
<text x="543.80" y="554.60" font-size="3.4" fill="#666" text-anchor="start" font-style="italic" >e</text>
<text x="547.00" y="552.30" font-size="2.4" fill="#666" text-anchor="start" >2</text>
<text x="592.50" y="563.20" font-size="3.6" fill="#666" text-anchor="start" font-style="italic" >-6</text>
<text x="599.00" y="566.00" font-size="7" fill="#545454" text-anchor="start" font-style="italic" >z</text>
<text x="603.00" y="563.00" font-size="3.6" fill="#666" text-anchor="start" font-style="italic" >2</text>
<text x="605.50" y="566.00" font-size="7" fill="#545454" text-anchor="start" font-style="italic" >)</text>
<text x="608.20" y="562.60" font-size="3.6" fill="#666" text-anchor="start" textLength="6.00" lengthAdjust="spacingAndGlyphs" font-style="italic" >0,5</text>
<text x="461.80" y="581.70" font-size="3.6" fill="#666" text-anchor="start" font-style="italic" >0</text>
<text x="465.50" y="581.70" font-size="7" fill="#545454" text-anchor="start" textLength="17.00" lengthAdjust="spacingAndGlyphs" font-style="italic" >=76 мкм;</text>
<text x="533.00" y="605.20" font-size="8" fill="#545454" text-anchor="start" font-style="italic" >P</text>
<text x="538.50" y="607.20" font-size="2.8" fill="#666" text-anchor="start" textLength="7.00" lengthAdjust="spacingAndGlyphs" >(1030)</text>
<text x="546.00" y="604.60" font-size="7" fill="#545454" text-anchor="start" textLength="13.00" lengthAdjust="spacingAndGlyphs" font-style="italic" >=1%;</text>
<text x="531.50" y="612.20" font-size="3.4" fill="#666" text-anchor="start" font-style="italic" >1</text>
<line x1="530.00" y1="613.80" x2="534.50" y2="613.80" stroke="#888" stroke-width="0.4" />
<text x="529.70" y="618.60" font-size="3.4" fill="#666" text-anchor="start" font-style="italic" >e</text>
<text x="533.00" y="616.30" font-size="2.4" fill="#666" text-anchor="start" >2</text>
<text x="540.70" y="615.50" font-size="7.0" fill="#545454" text-anchor="start" textLength="31.30" lengthAdjust="spacingAndGlyphs" font-style="italic" >– 10,6 мкм;</text>
<text x="771.80" y="236.60" font-size="12.0" fill="#2a2a2a" text-anchor="start" textLength="157.00" lengthAdjust="spacingAndGlyphs" font-style="italic" >Лазерно-оптическая система</text>
<line x1="770.00" y1="241.30" x2="930.00" y2="241.30" stroke="#444" stroke-width="0.9" />
<rect x="752.60" y="263.00" width="67.80" height="45.40" fill="none" stroke="#333" stroke-width="0.9" />
<rect x="820.40" y="272.60" width="8.40" height="23.00" fill="none" stroke="#333" stroke-width="0.9" />
<line x1="828.80" y1="279.60" x2="904.20" y2="279.60" stroke="#222" stroke-width="1.1" />
<line x1="828.80" y1="290.20" x2="911.80" y2="290.20" stroke="#222" stroke-width="1.1" />
<line x1="903.80" y1="279.60" x2="903.80" y2="337.50" stroke="#222" stroke-width="1.1" />
<line x1="911.60" y1="290.20" x2="911.60" y2="337.50" stroke="#222" stroke-width="1.1" />
<rect x="887.3" y="282.8" width="49" height="5" fill="none" stroke="#666" stroke-width="0.6" transform="rotate(51.8 911.8 285.3)"/>
<text x="719.50" y="259.60" font-size="8.6" fill="#444" text-anchor="start" font-style="italic" >1</text>
<line x1="718.00" y1="263.20" x2="774.00" y2="284.50" stroke="#888" stroke-width="0.5" />
<path d="M774 284.5 L770 282 L769.5 284 Z" fill="#666"/>
<text x="861.50" y="311.50" font-size="8.6" fill="#444" text-anchor="start" font-style="italic" >2</text>
<path d="M847 286.5 L856.6 312.8 H869.4" fill="none" stroke="#888" stroke-width="0.5" />
<text x="943.50" y="282.20" font-size="8.6" fill="#444" text-anchor="start" font-style="italic" >3</text>
<line x1="911.50" y1="286.30" x2="951.00" y2="283.60" stroke="#888" stroke-width="0.5" />
<text x="952.80" y="312.40" font-size="8.6" fill="#444" text-anchor="start" font-style="italic" >4</text>
<path d="M927.5 337 L952.3 313.6 H961.4" fill="none" stroke="#888" stroke-width="0.5" />
<text x="830.50" y="401.50" font-size="8.6" fill="#444" text-anchor="start" font-style="italic" >5</text>
<path d="M871.4 378.8 L838.7 402.8 H829.6" fill="none" stroke="#888" stroke-width="0.5" />
<text x="835.50" y="428.30" font-size="8.6" fill="#444" text-anchor="start" font-style="italic" >6</text>
<path d="M868.7 412.2 L845.2 431 H834.8" fill="none" stroke="#888" stroke-width="0.5" />
<text x="939.00" y="436.20" font-size="8.6" fill="#444" text-anchor="start" font-style="italic" >7</text>
<path d="M908.5 454.5 L938 438.8 H947" fill="none" stroke="#888" stroke-width="0.5" />
<line x1="907.90" y1="334.00" x2="907.90" y2="458.00" stroke="#aaa" stroke-width="0.5" stroke-dasharray="6,1.5,1,1.5"/>
<path d="M864.3 337.5 H951.8 V356.6 Q907.9 345 864.3 356.6 Z" fill="none" stroke="#333" stroke-width="0.9" />
<line x1="888.30" y1="351.50" x2="874.00" y2="373.50" stroke="#333" stroke-width="0.9" />
<line x1="927.50" y1="351.50" x2="941.90" y2="373.50" stroke="#333" stroke-width="0.9" />
<path d="M864.3 377.5 Q907.9 361 951.8 377.5 Q907.9 394 864.3 377.5 Z" fill="none" stroke="#333" stroke-width="0.9" />
<line x1="872.70" y1="385.50" x2="872.70" y2="409.00" stroke="#333" stroke-width="0.9" />
<line x1="943.20" y1="385.50" x2="943.20" y2="409.00" stroke="#333" stroke-width="0.9" />
<path d="M864.3 408.8 Q907.9 417 951.8 408.8 V415.3 Q907.9 434 864.3 415.3 Z" fill="none" stroke="#333" stroke-width="0.9" />
<path d="M874 419.8 L907.9 455 L941.9 419.8" fill="none" stroke="#333" stroke-width="0.9" />
<text x="677.10" y="336.20" font-size="8.6" fill="#4a4a4a" text-anchor="start" textLength="33.30" lengthAdjust="spacingAndGlyphs" font-style="italic" >1 – Лазер</text>
<text x="677.10" y="345.70" font-size="8.6" fill="#4a4a4a" text-anchor="start" textLength="131.40" lengthAdjust="spacingAndGlyphs" font-style="italic" >2 – Распространяющийся луч лазера</text>
<text x="677.10" y="354.70" font-size="8.6" fill="#4a4a4a" text-anchor="start" textLength="85.50" lengthAdjust="spacingAndGlyphs" font-style="italic" >3 – Поворотное зеркало</text>
<text x="677.10" y="363.70" font-size="8.6" fill="#4a4a4a" text-anchor="start" textLength="120.10" lengthAdjust="spacingAndGlyphs" font-style="italic" >4 – Расширитель луча (телескоп)</text>
<text x="677.10" y="372.70" font-size="8.6" fill="#4a4a4a" text-anchor="start" textLength="34.20" lengthAdjust="spacingAndGlyphs" font-style="italic" >5 – Линза</text>
<text x="677.10" y="381.70" font-size="8.6" fill="#4a4a4a" text-anchor="start" textLength="89.10" lengthAdjust="spacingAndGlyphs" font-style="italic" >6 – Фокусирующая линза</text>
<text x="677.10" y="391.20" font-size="8.6" fill="#4a4a4a" text-anchor="start" textLength="81.90" lengthAdjust="spacingAndGlyphs" font-style="italic" >7 – Точка фокуса луча</text>
<text x="671.70" y="410.20" font-size="8.2" fill="#2a2a2a" text-anchor="start" textLength="121.50" lengthAdjust="spacingAndGlyphs" font-style="italic" font-weight="bold" >Параметры оптической системы</text>
<rect x="668.50" y="415.20" width="151.00" height="93.20" fill="none" stroke="#333" stroke-width="0.9" />
<line x1="668.50" y1="427.10" x2="819.50" y2="427.10" stroke="#666" stroke-width="0.6" />
<line x1="668.50" y1="441.60" x2="819.50" y2="441.60" stroke="#666" stroke-width="0.6" />
<line x1="668.50" y1="455.50" x2="819.50" y2="455.50" stroke="#666" stroke-width="0.6" />
<line x1="668.50" y1="465.40" x2="819.50" y2="465.40" stroke="#666" stroke-width="0.6" />
<line x1="668.50" y1="486.60" x2="819.50" y2="486.60" stroke="#666" stroke-width="0.6" />
<line x1="776.50" y1="415.20" x2="776.50" y2="508.40" stroke="#666" stroke-width="0.6" />
<text x="722.50" y="424.10" font-size="8.2" fill="#505050" text-anchor="middle" textLength="69.00" lengthAdjust="spacingAndGlyphs" font-style="italic" >Длина волны лазера</text>
<text x="798.00" y="424.10" font-size="8.2" fill="#505050" text-anchor="middle" textLength="27.00" lengthAdjust="spacingAndGlyphs" font-style="italic" >1030 нм</text>
<text x="722.50" y="437.60" font-size="7.4" fill="#505050" text-anchor="middle" textLength="105.00" lengthAdjust="spacingAndGlyphs" font-style="italic" >Диаметр пучка на входе в систему фокусировки</text>
<text x="798.00" y="437.80" font-size="8.2" fill="#505050" text-anchor="middle" textLength="21.00" lengthAdjust="spacingAndGlyphs" font-style="italic" >3,3 мм</text>
<text x="722.50" y="451.50" font-size="7.0" fill="#505050" text-anchor="middle" textLength="102.00" lengthAdjust="spacingAndGlyphs" font-style="italic" >Увеличение расширительной линзы</text>
<text x="798.00" y="452.00" font-size="8.2" fill="#505050" text-anchor="middle" font-style="italic" >3</text>
<text x="800.50" y="447.00" font-size="4.5" fill="#505050" text-anchor="start" font-style="italic" >x</text>
<text x="722.50" y="463.00" font-size="8.0" fill="#505050" text-anchor="middle" textLength="100.00" lengthAdjust="spacingAndGlyphs" font-style="italic" >Фокусное расстояние линзы</text>
<text x="798.00" y="463.20" font-size="8.2" fill="#505050" text-anchor="middle" textLength="21.00" lengthAdjust="spacingAndGlyphs" font-style="italic" >70 мм</text>
<text x="722.50" y="474.00" font-size="7.4" fill="#505050" text-anchor="middle" textLength="104.00" lengthAdjust="spacingAndGlyphs" font-style="italic" >Расстояние между расширительной и</text>
<text x="722.50" y="482.50" font-size="7.4" fill="#505050" text-anchor="middle" textLength="89.00" lengthAdjust="spacingAndGlyphs" font-style="italic" >вспомогательной линзой</text>
<text x="798.00" y="479.20" font-size="8.2" fill="#505050" text-anchor="middle" textLength="22.00" lengthAdjust="spacingAndGlyphs" font-style="italic" >60 мм</text>
<text x="722.50" y="500.50" font-size="7.4" fill="#505050" text-anchor="middle" textLength="105.00" lengthAdjust="spacingAndGlyphs" font-style="italic" >Расстояние между вспомогательной и фокусирующей линзой</text>
<text x="798.00" y="500.50" font-size="8.2" fill="#505050" text-anchor="middle" textLength="26.00" lengthAdjust="spacingAndGlyphs" font-style="italic" >200 мм</text>
<text x="701.00" y="544.20" font-size="11.6" fill="#2a2a2a" text-anchor="start" textLength="104.70" lengthAdjust="spacingAndGlyphs" font-style="italic" >Расчетные формулы</text>
<line x1="696.30" y1="548.40" x2="813.30" y2="548.40" stroke="#444" stroke-width="0.9" />
<text x="701.00" y="568.00" font-size="9.6" fill="#4c4c4c" text-anchor="start" textLength="136.30" lengthAdjust="spacingAndGlyphs" font-style="italic" >Радиус пучка за точкой фокуса</text>
<text x="705.80" y="584.00" font-size="9.6" fill="#4c4c4c" text-anchor="start" textLength="25.20" lengthAdjust="spacingAndGlyphs" font-style="italic" >w(z)=w</text>
<text x="731.50" y="586.20" font-size="6" fill="#4c4c4c" text-anchor="start" font-style="italic" >0</text>
<text x="737.50" y="584.00" font-size="9.6" fill="#4c4c4c" text-anchor="start" textLength="14.00" lengthAdjust="spacingAndGlyphs" font-style="italic" >(1+(</text>
<text x="755.20" y="577.60" font-size="6" fill="#4c4c4c" text-anchor="start" textLength="7.00" lengthAdjust="spacingAndGlyphs" font-style="italic" >λz</text>
<line x1="752.00" y1="579.70" x2="762.00" y2="579.70" stroke="#777" stroke-width="0.4" />
<text x="748.80" y="590.00" font-size="5.6" fill="#4c4c4c" text-anchor="start" textLength="7.50" lengthAdjust="spacingAndGlyphs" font-style="italic" >πw</text>
<text x="756.30" y="591.00" font-size="3.5" fill="#4c4c4c" text-anchor="start" >0</text>
<text x="758.50" y="583.50" font-size="3.5" fill="#4c4c4c" text-anchor="start" font-style="italic" >2</text>
<text x="762.70" y="584.00" font-size="9.6" fill="#4c4c4c" text-anchor="start" font-style="italic" >)</text>
<text x="769.00" y="578.00" font-size="6" fill="#4c4c4c" text-anchor="start" font-style="italic" >2</text>
<text x="771.00" y="584.00" font-size="9.6" fill="#4c4c4c" text-anchor="start" font-style="italic" >)</text>
<text x="775.00" y="577.60" font-size="6" fill="#4c4c4c" text-anchor="start" textLength="9.80" lengthAdjust="spacingAndGlyphs" font-style="italic" >0,5</text>
<text x="701.00" y="600.20" font-size="9.6" fill="#4c4c4c" text-anchor="start" textLength="75.30" lengthAdjust="spacingAndGlyphs" font-style="italic" >Рэлеевская длина</text>
<text x="704.00" y="618.40" font-size="9.6" fill="#4c4c4c" text-anchor="start" font-style="italic" >z</text>
<text x="708.50" y="620.40" font-size="6" fill="#4c4c4c" text-anchor="start" font-style="italic" >0</text>
<text x="713.50" y="618.00" font-size="8" fill="#4c4c4c" text-anchor="start" font-style="italic" >=</text>
<text x="722.40" y="612.50" font-size="5.6" fill="#4c4c4c" text-anchor="start" textLength="7.50" lengthAdjust="spacingAndGlyphs" font-style="italic" >πw</text>
<text x="729.80" y="613.50" font-size="3.5" fill="#4c4c4c" text-anchor="start" >0</text>
<text x="732.50" y="605.50" font-size="3.5" fill="#4c4c4c" text-anchor="start" font-style="italic" >2</text>
<line x1="720.00" y1="614.10" x2="733.00" y2="614.10" stroke="#777" stroke-width="0.4" />
<text x="722.40" y="621.00" font-size="5.6" fill="#4c4c4c" text-anchor="start" font-style="italic" >λ</text>
<text x="854.00" y="547.60" font-size="9.6" fill="#4c4c4c" text-anchor="start" textLength="66.50" lengthAdjust="spacingAndGlyphs" font-style="italic" >Глубина фокуса</text>
<text x="854.00" y="559.40" font-size="9.6" fill="#4c4c4c" text-anchor="start" textLength="31.00" lengthAdjust="spacingAndGlyphs" font-style="italic" >DOF=2z</text>
<text x="884.50" y="561.20" font-size="6" fill="#4c4c4c" text-anchor="start" font-style="italic" >0</text>
<text x="854.00" y="576.30" font-size="9.6" fill="#4c4c4c" text-anchor="start" textLength="82.60" lengthAdjust="spacingAndGlyphs" font-style="italic" >Угол расходимости</text>
<text x="857.00" y="592.00" font-size="9.6" fill="#4c4c4c" text-anchor="start" font-style="italic" >θ</text>
<text x="862.50" y="594.00" font-size="6" fill="#4c4c4c" text-anchor="start" font-style="italic" >0</text>
<text x="866.50" y="591.50" font-size="8" fill="#4c4c4c" text-anchor="start" font-style="italic" >=</text>
<text x="873.80" y="584.50" font-size="5" fill="#4c4c4c" text-anchor="start" font-style="italic" >w</text>
<text x="877.80" y="586.00" font-size="2.5" fill="#4c4c4c" text-anchor="start" >0</text>
<line x1="873.50" y1="586.50" x2="880.50" y2="586.50" stroke="#777" stroke-width="0.4" />
<text x="873.80" y="593.20" font-size="5.5" fill="#4c4c4c" text-anchor="start" font-style="italic" >z</text>
<text x="877.50" y="594.30" font-size="3" fill="#4c4c4c" text-anchor="start" >0</text>
<rect x="848.10" y="602.10" width="138.30" height="41.10" fill="#fff" stroke="#444" stroke-width="0.8" />
<line x1="852.70" y1="602.10" x2="852.70" y2="643.20" stroke="#444" stroke-width="0.7" />
<line x1="861.20" y1="602.10" x2="861.20" y2="643.20" stroke="#444" stroke-width="0.7" />
<line x1="877.30" y1="602.10" x2="877.30" y2="643.20" stroke="#444" stroke-width="0.7" />
<line x1="889.00" y1="602.10" x2="889.00" y2="643.20" stroke="#444" stroke-width="0.7" />
<line x1="896.40" y1="602.10" x2="896.40" y2="643.20" stroke="#444" stroke-width="0.7" />
<line x1="848.10" y1="605.90" x2="896.40" y2="605.90" stroke="#999" stroke-width="0.35" />
<line x1="848.10" y1="609.70" x2="896.40" y2="609.70" stroke="#999" stroke-width="0.35" />
<line x1="848.10" y1="613.50" x2="896.40" y2="613.50" stroke="#999" stroke-width="0.35" />
<line x1="848.10" y1="617.30" x2="896.40" y2="617.30" stroke="#999" stroke-width="0.35" />
<line x1="848.10" y1="621.10" x2="896.40" y2="621.10" stroke="#999" stroke-width="0.35" />
<line x1="848.10" y1="624.90" x2="896.40" y2="624.90" stroke="#999" stroke-width="0.35" />
<line x1="848.10" y1="628.70" x2="896.40" y2="628.70" stroke="#999" stroke-width="0.35" />
<line x1="848.10" y1="632.50" x2="896.40" y2="632.50" stroke="#999" stroke-width="0.35" />
<line x1="848.10" y1="636.30" x2="896.40" y2="636.30" stroke="#999" stroke-width="0.35" />
<line x1="848.10" y1="640.10" x2="896.40" y2="640.10" stroke="#999" stroke-width="0.35" />
<line x1="848.10" y1="617.30" x2="896.40" y2="617.30" stroke="#444" stroke-width="0.7" />
<line x1="848.10" y1="621.10" x2="896.40" y2="621.10" stroke="#444" stroke-width="0.7" />
<line x1="896.40" y1="613.60" x2="986.40" y2="613.60" stroke="#444" stroke-width="0.7" />
<line x1="896.40" y1="632.00" x2="986.40" y2="632.00" stroke="#444" stroke-width="0.7" />
<line x1="949.40" y1="613.60" x2="949.40" y2="643.20" stroke="#444" stroke-width="0.7" />
<line x1="949.40" y1="617.40" x2="986.40" y2="617.40" stroke="#444" stroke-width="0.6" />
<line x1="949.40" y1="628.20" x2="986.40" y2="628.20" stroke="#444" stroke-width="0.6" />
<line x1="956.40" y1="617.40" x2="956.40" y2="628.20" stroke="#999" stroke-width="0.5" />
<line x1="960.50" y1="613.60" x2="960.50" y2="628.20" stroke="#444" stroke-width="0.7" />
<line x1="973.30" y1="613.60" x2="973.30" y2="628.20" stroke="#444" stroke-width="0.6" />
<line x1="963.90" y1="628.20" x2="963.90" y2="632.00" stroke="#444" stroke-width="0.6" />
<text x="940.60" y="606.90" font-size="3.8" fill="#555" text-anchor="middle" textLength="28.00" lengthAdjust="spacingAndGlyphs" font-style="italic" >Расчет параметров</text>
<text x="940.60" y="611.40" font-size="3.8" fill="#555" text-anchor="middle" textLength="36.00" lengthAdjust="spacingAndGlyphs" font-style="italic" >сфокусированного  луча</text>
<text x="979.00" y="624.50" font-size="4.0" fill="#555" text-anchor="middle" font-style="italic" >11</text>
<text x="967.30" y="640.30" font-size="6.8" fill="#444" text-anchor="middle" textLength="35.30" lengthAdjust="spacingAndGlyphs" font-style="italic" >МГТУ им. Баумана</text>
<text x="958.00" y="616.90" font-size="2.6" fill="#666" text-anchor="start" textLength="27.00" lengthAdjust="spacingAndGlyphs" font-style="italic" >Лит.   Масса   Масштаб</text>
<text x="951.00" y="631.30" font-size="2.6" fill="#666" text-anchor="start" textLength="33.00" lengthAdjust="spacingAndGlyphs" font-style="italic" >Лист      Листов  1</text>
<text x="849.00" y="619.90" font-size="2.4" fill="#666" text-anchor="start" textLength="46.00" lengthAdjust="spacingAndGlyphs" font-style="italic" >Изм. Лист  № докум.  Подп.  Дата</text>
<text x="849.00" y="623.80" font-size="2.4" fill="#666" text-anchor="start" textLength="24.00" lengthAdjust="spacingAndGlyphs" font-style="italic" >Разраб.  Анисимов</text>
<text x="849.00" y="627.50" font-size="2.4" fill="#666" text-anchor="start" textLength="24.00" lengthAdjust="spacingAndGlyphs" font-style="italic" >Пров.   Богданов</text>
<text x="849.00" y="631.20" font-size="2.4" fill="#666" text-anchor="start" textLength="12.00" lengthAdjust="spacingAndGlyphs" font-style="italic" >Т.контр.</text>
<text x="849.00" y="638.80" font-size="2.4" fill="#666" text-anchor="start" textLength="12.00" lengthAdjust="spacingAndGlyphs" font-style="italic" >Н.контр.</text>
<text x="849.00" y="642.50" font-size="2.4" fill="#666" text-anchor="start" textLength="8.00" lengthAdjust="spacingAndGlyphs" font-style="italic" >Утв.</text>
</svg>
</body></html>
